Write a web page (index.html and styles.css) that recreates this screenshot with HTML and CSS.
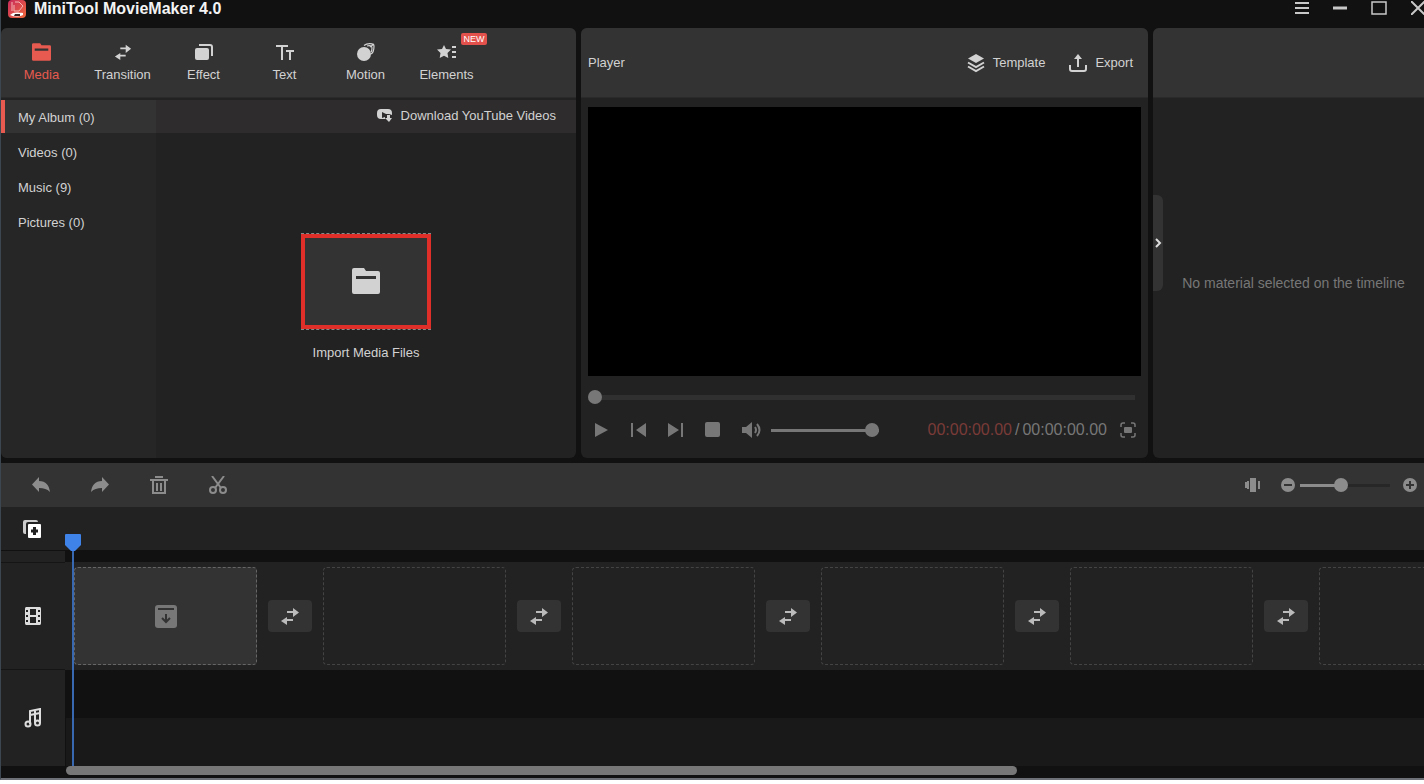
FILE: index.html
```html
<!DOCTYPE html>
<html lang="en">
<head>
    <meta charset="UTF-8">
    <meta name="viewport" content="width=device-width, initial-scale=1.0">
    <title>MiniTool MovieMaker 4.0</title>
    <link rel="stylesheet" href="styles.css">
</head>
<body>
    <!-- shared icons -->
    <svg class="defs" width="0" height="0" aria-hidden="true">
        <symbol id="swap" viewBox="0 0 20 18">
            <path d="M7 4h6V1l6 4.500-6 4.500V6H7zM13 12H7v-2l-6 4 6 4v-4h6z"/>
        </symbol>
        <symbol id="folder" viewBox="0 0 28 26">
            <path fill-rule="evenodd" d="M2 0h10l2 3h12a2 2 0 0 1 2 2v19a2 2 0 0 1-2 2H2a2 2 0 0 1-2-2V2a2 2 0 0 1 2-2zM4 8v3h20V8z"/>
        </symbol>
    </svg>

    <div class="app">
        <header class="titlebar">
            <svg class="logo" width="18" height="18" viewBox="0 0 18 18">
                <defs>
                    <linearGradient id="logo-bg" x1="0" y1="0" x2="1" y2="1">
                        <stop offset="0" stop-color="#c92a5c"/>
                        <stop offset="1" stop-color="#ee6a3c"/>
                    </linearGradient>
                </defs>
                <rect width="18" height="18" rx="4" fill="url(#logo-bg)"/>
                <path d="M4 2v9M7 2h4l4 4-4 5H6V5" fill="none" stroke="#f4b6b4" stroke-width="1"/>
                <path d="M2 15c3-3 6-3 13-2v2c-5 2-9 2-13 0z" fill="#fff"/>
                <path d="M7 14h5v2H6z" fill="#3a2426"/>
            </svg>
            <h1>MiniTool MovieMaker 4.0</h1>
            <div class="window-buttons">
                <button aria-label="Menu"><svg width="14" height="14" viewBox="0 0 14 14"><path d="M0 2h14M0 7h14M0 12h14" stroke-width="2"/></svg></button>
                <button aria-label="Minimize"><svg width="14" height="14" viewBox="0 0 14 14"><path d="M0 7h14" stroke-width="3"/></svg></button>
                <button aria-label="Maximize"><svg width="16" height="14" viewBox="0 0 16 14"><path d="M1 1h14v12H1z" stroke-width="1.5"/></svg></button>
                <button aria-label="Close"><svg width="14" height="14" viewBox="0 0 14 14"><path d="M0 0l14 14M14 0L0 14" stroke-width="2"/></svg></button>
            </div>
        </header>

        <main class="panels">
            <section class="panel media">
                <nav class="panel-head tabs">
                    <button class="tab active">
                        <svg width="19" height="18"><use href="#folder"/></svg>
                        Media
                    </button>
                    <button class="tab">
                        <svg width="18" height="18"><use href="#swap"/></svg>
                        Transition
                    </button>
                    <button class="tab">
                        <svg width="20" height="18" viewBox="0 0 20 18">
                            <rect x="1" y="5" width="14" height="12" rx="2"/>
                            <path d="M5 2h11a2 2 0 0 1 2 2v9" fill="none" stroke="currentColor" stroke-width="2"/>
                        </svg>
                        Effect
                    </button>
                    <button class="tab">
                        <svg width="20" height="18" viewBox="0 0 20 18">
                            <path d="M1 3h12M7 3v14M11 8h8M15 8v9" fill="none" stroke="currentColor" stroke-width="2"/>
                        </svg>
                        Text
                    </button>
                    <button class="tab">
                        <svg width="20" height="18" viewBox="0 0 20 18">
                            <circle cx="8" cy="11" r="7"/>
                            <path d="M8 2.500C11 0 18 0 18 3s-1 7-3 8M11 3c3-1 5 0 5 2s0 3-1 4M14 4l4-3" fill="none" stroke="currentColor" stroke-width="1.2"/>
                        </svg>
                        Motion
                    </button>
                    <button class="tab">
                        <svg width="20" height="18" viewBox="0 0 20 18">
                            <path d="M7 2l2 4 5 .6-3.500 3.500.8 4.900L7 12.700 2.700 15l.8-4.900L0 6.600 5 6z"/>
                            <path d="M15 4h4M15 9h4M15 14h4" fill="none" stroke="currentColor" stroke-width="2"/>
                        </svg>
                        Elements
                        <span class="badge">NEW</span>
                    </button>
                </nav>
                <div class="media-body">
                    <nav class="albums">
                        <a class="album active" href="#album">My Album (0)</a>
                        <a class="album" href="#videos">Videos (0)</a>
                        <a class="album" href="#music">Music (9)</a>
                        <a class="album" href="#pictures">Pictures (0)</a>
                    </nav>
                    <div class="library">
                        <div class="download-bar">
                            <a href="#download">
                                <svg width="16" height="14" viewBox="0 0 16 14">
                                    <path fill-rule="evenodd" d="M4 1h7a4 4 0 0 1 4 4v2l-3-1H9L5 4v6l3-1v2H4a4 4 0 0 1-4-4V5a4 4 0 0 1 4-4z"/>
                                    <path d="M10 7h3v3h2l-3 4-4-4h2z"/>
                                </svg>
                                Download YouTube Videos
                            </a>
                        </div>
                        <div class="import">
                            <button class="import-box" id="import" aria-label="Import Media Files">
                                <svg width="28" height="26"><use href="#folder"/></svg>
                            </button>
                            <label for="import">Import Media Files</label>
                        </div>
                    </div>
                </div>
            </section>

            <section class="panel player">
                <div class="panel-head player-head">
                    <h2>Player</h2>
                    <button>
                        <svg width="18" height="20" viewBox="0 0 18 20">
                            <path d="M9 1l8 4.500L9 10 1 5.500z"/>
                            <path d="M1 9.500L9 14l8-4.500M1 13.500L9 18l8-4.500" fill="none" stroke="currentColor" stroke-width="2"/>
                        </svg>
                        Template
                    </button>
                    <button>
                        <svg width="18" height="20" viewBox="0 0 18 20">
                            <path d="M1 12v4a2 2 0 0 0 2 2h12a2 2 0 0 0 2-2v-4M9 14V4" fill="none" stroke="currentColor" stroke-width="2"/>
                            <path d="M9 1l4 5H5z"/>
                        </svg>
                        Export
                    </button>
                </div>
                <div class="player-body">
                    <div class="screen"></div>
                    <input class="slider seek" type="range" min="0" max="100" value="0" aria-label="Position">
                    <div class="controls">
                        <button aria-label="Play"><svg width="16" height="16" viewBox="0 0 16 16"><path d="M1 1l13 7-13 7z"/></svg></button>
                        <button aria-label="Previous frame"><svg width="16" height="16" viewBox="0 0 16 16"><path d="M0 1h2v14H0zM15 1v14L5 8z"/></svg></button>
                        <button aria-label="Next frame"><svg width="16" height="16" viewBox="0 0 16 16"><path d="M13 1h2v14h-2zM0 1v14l11-7z"/></svg></button>
                        <button aria-label="Stop"><svg width="16" height="16" viewBox="0 0 16 16"><rect width="15" height="15" rx="2"/></svg></button>
                        <button aria-label="Mute">
                            <svg width="20" height="16" viewBox="0 0 20 16">
                                <path d="M0 5h4l6-5v16l-6-5H0z"/>
                                <path d="M13 5q2 3 0 6M15 2q5 6 0 12" fill="none" stroke="currentColor" stroke-width="2"/>
                            </svg>
                        </button>
                        <input class="slider volume" type="range" min="0" max="100" value="100" aria-label="Volume">
                        <div class="time"><span class="current">00:00:00.00</span><span>/</span><span>00:00:00.00</span></div>
                        <button aria-label="Full screen">
                            <svg width="16" height="16" viewBox="0 0 16 16">
                                <path d="M1 5V3a2 2 0 0 1 2-2h2M11 1h2a2 2 0 0 1 2 2v2M15 11v2a2 2 0 0 1-2 2h-2M5 15H3a2 2 0 0 1-2-2v-2" fill="none" stroke="currentColor" stroke-width="1.500"/>
                                <rect x="4" y="5" width="8" height="6" rx="1"/>
                            </svg>
                        </button>
                    </div>
                </div>
            </section>

            <section class="panel props">
                <div class="panel-head"></div>
                <p>No material selected on the timeline</p>
                <button class="collapse" aria-label="Collapse panel">
                    <svg width="8" height="12" viewBox="0 0 8 12"><path d="M1 2l4 4-4 4" fill="none" stroke="currentColor" stroke-width="2"/></svg>
                </button>
            </section>
        </main>

        <div class="toolbar">
            <button aria-label="Undo"><svg width="20" height="18" viewBox="0 0 20 18"><path d="M8 1v4c7 0 10 4 11 11-3-3-6-4-11-4v4L1 8.500z"/></svg></button>
            <button aria-label="Redo"><svg width="20" height="18" viewBox="0 0 20 18"><path d="M12 1v4C5 5 2 9 1 16c3-3 6-4 11-4v4l7-7.500z"/></svg></button>
            <button aria-label="Delete">
                <svg width="20" height="18" viewBox="0 0 20 18">
                    <path d="M6 1h8M1 4h18M4 4v13h12V4M8 7v8M12 7v8" fill="none" stroke="currentColor" stroke-width="2"/>
                </svg>
            </button>
            <button aria-label="Split">
                <svg width="20" height="18" viewBox="0 0 20 18">
                    <path d="M4 0l9 12M16 0L7 12" fill="none" stroke="currentColor" stroke-width="2"/>
                    <circle cx="5" cy="14" r="3" fill="none" stroke="currentColor" stroke-width="2"/>
                    <circle cx="15" cy="14" r="3" fill="none" stroke="currentColor" stroke-width="2"/>
                </svg>
            </button>
            <div class="zoom">
                <button class="fit" aria-label="Zoom to fit"><svg width="16" height="16" viewBox="0 0 16 16"><path d="M0 5h2v6H0zM2 4h2v8H2zM5 1h6v14H5zM13 4h2v8h-2z"/></svg></button>
                <button aria-label="Zoom out"><svg width="14" height="14" viewBox="0 0 14 14"><circle cx="7" cy="7" r="7"/><path d="M3 7h8" stroke="#333" stroke-width="2"/></svg></button>
                <input class="slider scale" type="range" min="0" max="100" value="45" aria-label="Timeline zoom">
                <button aria-label="Zoom in"><svg width="14" height="14" viewBox="0 0 14 14"><circle cx="7" cy="7" r="7"/><path d="M3 7h8M7 3v8" stroke="#333" stroke-width="2"/></svg></button>
            </div>
        </div>

        <div class="timeline">
            <div class="ruler">
                <button aria-label="Add track">
                    <svg width="20" height="20" viewBox="0 0 20 20">
                        <path d="M3 1h11a2 2 0 0 1 2 2H6a2 2 0 0 0-2 2v10H3a2 2 0 0 1-2-2V3a2 2 0 0 1 2-2z" fill="#ccc"/>
                        <rect x="6" y="5" width="13" height="14" rx="1" fill="#fff"/>
                        <path d="M9 12h7M12.500 8v8" stroke="#222" stroke-width="3"/>
                    </svg>
                </button>
            </div>
            <div class="spacer"><div class="track-head"></div></div>
            <div class="track video-track">
                <div class="track-head">
                    <svg width="18" height="20" viewBox="0 0 18 20">
                        <path fill-rule="evenodd" d="M2 1h14a2 2 0 0 1 1 2v14a2 2 0 0 1-1 2H2a2 2 0 0 1-1-2V3a2 2 0 0 1 1-2zM6 3v6h6V3zM6 11v6h6v-6zM2 4v2h2V4zM2 9v2h2V9zM2 14v2h2v-2zM14 4v2h2V4zM14 9v2h2V9zM14 14v2h2v-2z"/>
                    </svg>
                </div>
                <div class="clips">
                    <div class="clip filled">
                        <svg width="22" height="23" viewBox="0 0 22 23">
                            <rect width="22" height="23" rx="3"/>
                            <path d="M3 4h16M11 9v8M7 13l4 4 4-4" fill="none" stroke="#333" stroke-width="2"/>
                        </svg>
                    </div>
                    <button class="swap" aria-label="Transition 1"><svg width="20" height="20"><use href="#swap"/></svg></button>
                    <div class="clip"></div>
                    <button class="swap" aria-label="Transition 2"><svg width="20" height="20"><use href="#swap"/></svg></button>
                    <div class="clip"></div>
                    <button class="swap" aria-label="Transition 3"><svg width="20" height="20"><use href="#swap"/></svg></button>
                    <div class="clip"></div>
                    <button class="swap" aria-label="Transition 4"><svg width="20" height="20"><use href="#swap"/></svg></button>
                    <div class="clip"></div>
                    <button class="swap" aria-label="Transition 5"><svg width="20" height="20"><use href="#swap"/></svg></button>
                    <div class="clip"></div>
                </div>
            </div>
            <div class="track audio-track">
                <div class="track-head">
                    <svg width="18" height="20" viewBox="0 0 18 20">
                        <path d="M6 16V3l10-2v14M6 7l10-2M11 3v12" fill="none" stroke="currentColor" stroke-width="2"/>
                        <circle cx="4" cy="16" r="2.500" fill="none" stroke="currentColor" stroke-width="2"/>
                        <circle cx="13.500" cy="15" r="2.500" fill="none" stroke="currentColor" stroke-width="2"/>
                    </svg>
                </div>
                <div class="lanes"></div>
            </div>
            <div class="playhead">
                <svg width="16" height="17" viewBox="0 0 16 17"><path d="M0 1a1 1 0 0 1 1-1h14a1 1 0 0 1 1 1v10l-6 6H6l-6-6z"/></svg>
            </div>
        </div>
        <div class="scrollbar"><div class="thumb"></div></div>
    </div>
</body>
</html>
```
FILE: styles.css
```css
* {
    box-sizing: border-box;
}

body {
    margin: 0;
    background: #fff;
    color: #d2d2d2;
    font-family: "Liberation Sans", Arial, sans-serif;
    font-size: 13px;
    line-height: 16px;
    overflow: hidden;
}

h1, h2, p {
    margin: 0;
}

button {
    padding: 0;
    border: none;
    background: none;
    color: inherit;
    font: inherit;
    cursor: pointer;
}

a {
    color: inherit;
    text-decoration: none;
}

svg {
    display: block;
    flex: none;
    fill: currentColor;
}

.defs {
    position: absolute;
}

.app {
    display: flex;
    flex-direction: column;
    height: calc(100vh - 4px);
    min-height: 640px;
    background: #111;
    border-left: 1px solid #3b4650;
    border-bottom: 2px solid #6e7278;
    overflow: hidden;
}

/* title bar */
.titlebar {
    display: flex;
    align-items: flex-start;
    height: 28px;
    padding-left: 7px;
}

.titlebar h1 {
    flex: 1;
    margin-left: 8px;
    color: #f4f4f4;
    font-size: 16px;
    font-weight: bold;
    line-height: 18px;
}

.window-buttons {
    display: flex;
    gap: 24px;
    height: 16px;
    margin-right: -1px;
}

.window-buttons svg {
    fill: none;
    stroke: #c8c8c8;
}

/* panels */
.panels {
    display: grid;
    grid-template-columns: 575fr 567fr 271fr;
    gap: 5px;
    flex: 1;
    min-height: 0;
}

.panel {
    display: flex;
    flex-direction: column;
    min-width: 0;
    background: #222;
    border-radius: 6px;
    overflow: hidden;
}

.panel-head {
    display: flex;
    flex: none;
    height: 70px;
    background: #333;
    border-bottom: 1px solid #2a2a2a;
}

.tab {
    position: relative;
    display: flex;
    flex-direction: column;
    align-items: center;
    justify-content: center;
    gap: 6px;
    width: 81px;
    padding-top: 1px;
}

.tab.active {
    color: #e65a4f;
}

.badge {
    position: absolute;
    top: 5px;
    left: 55px;
    width: 26px;
    border-radius: 2px;
    background: #e2514b;
    color: #fff;
    font-size: 9px;
    line-height: 12px;
}

.media-body {
    display: flex;
    flex: 1;
    padding-top: 2px;
}

.albums {
    display: flex;
    flex-direction: column;
    gap: 2px;
    width: 155px;
    background: #262626;
}

.album {
    padding: 10px 0 7px 13px;
    border-left: 4px solid transparent;
}

.album.active {
    background: #333;
    border-color: #e65a4f;
}

.library {
    display: flex;
    flex-direction: column;
    flex: 1;
}

.download-bar {
    display: flex;
    justify-content: flex-end;
    height: 33px;
    padding: 8px 20px;
    background: #2e2c2c;
}

.download-bar a {
    display: flex;
    gap: 8px;
}

.import {
    display: flex;
    flex: 1;
    flex-direction: column;
    align-items: center;
    justify-content: center;
    gap: 15px;
    padding-top: 2px;
}

.import-box {
    display: flex;
    align-items: center;
    justify-content: center;
    width: 130px;
    height: 97px;
    border-top: 1px dashed #888;
    border-bottom: 1px dashed #888;
    background: #333 padding-box;
    box-shadow: inset 0 0 0 4px #df2f28;
}

/* player */
.player-head {
    align-items: center;
    gap: 24px;
    padding: 0 15px 0 7px;
}

.player-head h2 {
    flex: 1;
    font-size: 13px;
    font-weight: normal;
}

.player-head button {
    display: flex;
    align-items: center;
    gap: 8px;
}

.player-body {
    display: flex;
    flex: 1;
    flex-direction: column;
    padding: 9px 7px 0;
    color: #777;
}

.screen {
    flex: 1;
    background: #000;
}

.slider {
    appearance: none;
    height: 14px;
    margin: 0;
    background: linear-gradient(#777, #777) center / 100% 3px no-repeat;
}

.slider::-webkit-slider-thumb {
    appearance: none;
    width: 14px;
    height: 14px;
    border-radius: 50%;
    background: #777;
}

.seek {
    margin: 14px 6px 0 0;
    background-image: linear-gradient(#303030, #303030);
    background-size: 100% 5px;
}

.controls {
    display: flex;
    align-items: center;
    gap: 21px;
    height: 52px;
    padding: 0 5px 0 6px;
    margin-bottom: 2px;
}

.volume {
    width: 108px;
    margin-left: -12px;
}

.time {
    display: flex;
    gap: 3px;
    margin-left: auto;
    margin-right: -8px;
    font-size: 16px;
}

.time .current {
    color: #7a3b38;
}

/* properties */
.props {
    position: relative;
    border-radius: 6px 0 0 6px;
}

.props p {
    margin: auto;
    padding: 10px 0 0 10px;
    color: #777;
    font-size: 14px;
    white-space: nowrap;
}

.collapse {
    position: absolute;
    top: calc(50% - 48px);
    left: 0;
    width: 10px;
    height: 96px;
    padding-left: 2px;
    border-radius: 0 6px 6px 0;
    background: #333;
    color: #ddd;
}

/* toolbar */
.toolbar {
    display: flex;
    align-items: center;
    gap: 39px;
    height: 44px;
    margin-top: 5px;
    padding: 0 7px 0 30px;
    background: #333;
    color: #8c8c8c;
}

.zoom {
    display: flex;
    align-items: center;
    gap: 5px;
    margin-left: auto;
}

.zoom .fit {
    margin-right: 15px;
}

.scale {
    width: 90px;
    margin-right: 8px;
    background-image: linear-gradient(90deg, #8c8c8c 45%, #272727 45%);
}

.scale::-webkit-slider-thumb {
    background: #8c8c8c;
}

/* timeline */
.timeline {
    position: relative;
}

.ruler {
    display: flex;
    align-items: center;
    height: 43px;
    padding-left: 21px;
    background: #222;
}

.spacer {
    height: 12px;
    padding-top: 1px;
}

.track {
    display: flex;
}

.track-head {
    display: flex;
    flex: none;
    align-items: center;
    justify-content: center;
    width: 64px;
    height: 100%;
    background: #222;
    color: #ddd;
}

.video-track {
    height: 108px;
    background: #222;
}

.video-track .track-head {
    border-top: 1px solid #151515;
    border-bottom: 1px solid #151515;
}

.clips {
    display: flex;
    flex: 1;
    align-items: center;
    gap: 11px;
    padding-left: 9px;
    overflow: hidden;
}

.clip {
    display: flex;
    flex: none;
    align-items: center;
    justify-content: center;
    width: 183px;
    height: 98px;
    border: 1px dashed #444;
    border-radius: 4px;
}

.clip.filled {
    border-color: #666;
    background: #333;
    color: #777;
}

.swap {
    display: flex;
    flex: none;
    align-items: center;
    justify-content: center;
    width: 44px;
    height: 32px;
    border-radius: 4px;
    background: #333;
    color: #bbb;
}

.audio-track {
    height: 96px;
}

.lanes {
    flex: 1;
    margin-left: 1px;
    background: linear-gradient(#111 50%, #191919 50%);
}

.playhead {
    position: absolute;
    top: 27px;
    bottom: 0;
    left: 64px;
    width: 16px;
    color: #3f82e8;
}

.playhead::after {
    content: "";
    position: absolute;
    top: 17px;
    bottom: 0;
    left: 7px;
    width: 2px;
    background: #3768b0;
}

.scrollbar {
    height: 12px;
    padding-left: 65px;
}

.thumb {
    width: 70%;
    height: 9px;
    border-radius: 5px;
    background: #777;
}
```
